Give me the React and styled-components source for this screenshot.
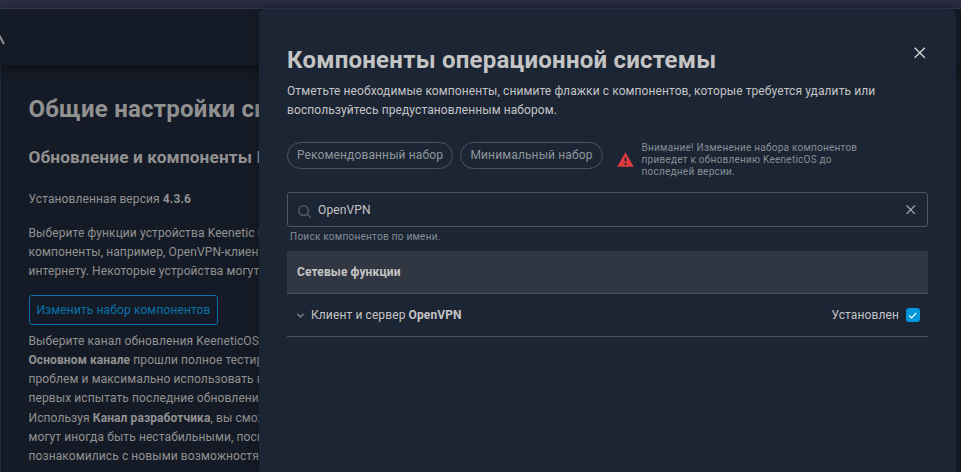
import React from "react";
import styled, { createGlobalStyle } from "styled-components";

const GlobalStyle = createGlobalStyle`
  *, *::before, *::after { box-sizing: border-box; }
  body { margin: 0; background: #151b26; font-family: Roboto, sans-serif; overflow: hidden; }
  h1, h2, p { margin: 0; }
  button, input { font-family: inherit; }
`;

const Window = styled.div`
  width: 961px;
  height: 472px;
  overflow: hidden;
  display: flex;
  flex-direction: column;
`;

const BrowserStrip = styled.div`
  flex: none;
  height: 9px;
  background: #2b2d42;
  border-bottom: 1px solid #3d4060;
`;

const Workspace = styled.div`
  position: relative;
  flex: 1;
  display: flex;
  flex-direction: column;
  background: #151b26;
`;

const AppHeader = styled.header`
  flex: none;
  height: 56px;
  background: #151b26;
  box-shadow: 0 2px 10px rgba(0, 0, 0, 0.55);
  z-index: 1;
  svg { display: block; }
`;

const Page = styled.main`
  flex: 1;
  border-left: 1px solid #1e2a3d;
  padding: 28px 0 0 27.5px;
  color: #919191;
  white-space: nowrap;
`;

const PageTitle = styled.h1`
  font-size: 24px;
  line-height: 32px;
  font-weight: 700;
  letter-spacing: 0.24px;
`;

const SectionTitle = styled.h2`
  margin-top: 21px;
  font-size: 17.28px;
  line-height: 22px;
  font-weight: 700;
  letter-spacing: 0.12px;
`;

const PageText = styled.p`
  margin-top: ${(p) => p.$gap}px;
  font-size: 12px;
  line-height: 19.2px;
  letter-spacing: 0.1px;
`;

const OutlineButton = styled.button`
  display: block;
  width: 189px;
  height: 30px;
  margin-top: 13.7px;
  margin-left: 0.5px;
  padding: 0;
  border: 1px solid #0573ab;
  border-radius: 3px;
  background: transparent;
  color: #0573ab;
  font-size: 12px;
  letter-spacing: 0.12px;
`;

const Drawer = styled.aside`
  position: absolute;
  top: 0;
  left: 259px;
  z-index: 2;
  width: 697px;
  height: 463px;
  padding: 35px 28px 0;
  border-radius: 6px 6px 0 0;
  background: #1c2534;
  box-shadow: 0 0 12px rgba(0, 0, 0, 0.3);
  color: #c4c4c4;
`;

const DrawerHeader = styled.div`
  display: flex;
  justify-content: space-between;
`;

const DrawerTitle = styled.h1`
  font-size: 24px;
  line-height: 32px;
  font-weight: 700;
  letter-spacing: 0.24px;
`;

const IconButton = styled.button`
  display: flex;
  width: ${(p) => p.$size}px;
  height: ${(p) => p.$size}px;
  margin: ${(p) => p.$margin || 0};
  padding: 0;
  border: 0;
  background: none;
  color: ${(p) => p.$color};
`;

const Description = styled.p`
  margin-top: 6px;
  font-size: 12px;
  line-height: 19.2px;
  letter-spacing: 0.095px;
`;

const PresetRow = styled.div`
  display: flex;
  margin-top: 21.6px;
  height: 36px;
`;

const Pill = styled.button`
  width: ${(p) => p.$width}px;
  height: 27px;
  margin-right: 7px;
  padding: 0 0 1px;
  border: 1px solid #4d545e;
  border-radius: 14px;
  background: transparent;
  color: #8f969c;
  font-size: 12px;
  letter-spacing: 0.13px;
`;

const Warning = styled.div`
  display: flex;
  margin-left: 7px;
  color: #868e94;
  font-size: 10px;
  line-height: 12px;
  letter-spacing: 0.24px;
  white-space: nowrap;
  svg { margin: 10px 7.6px 0 0; }
`;

const SearchField = styled.label`
  display: flex;
  align-items: center;
  height: 35px;
  margin-top: 14px;
  padding: 0 10px 0 9.5px;
  border: 1px solid #4d545e;
  border-radius: 3px;
`;

const SearchGlass = styled.svg`
  margin: 4px 0 0;
`;

const SearchInput = styled.input`
  flex: 1;
  padding: 0;
  margin-left: 7.5px;
  border: 0;
  outline: 0;
  background: transparent;
  color: #c4c4c4;
  font-size: 12px;
  letter-spacing: 0.14px;
`;

const Hint = styled.p`
  margin: 4px 0 0 3px;
  color: #868e94;
  font-size: 10px;
  line-height: 12px;
  letter-spacing: 0.26px;
`;

const GroupRow = styled.div`
  display: flex;
  align-items: center;
  height: 43px;
  margin-top: 8px;
  padding: 0 10px;
  border-bottom: 1px solid #4d545e;
  background: #303642;
  font-size: 12px;
  font-weight: 700;
  letter-spacing: 0.12px;
`;

const ComponentRow = styled.div`
  display: flex;
  align-items: center;
  height: 43px;
  padding: 0 8px 0 10px;
  border-bottom: 1px solid #4d545e;
  font-size: 12px;
  letter-spacing: 0.11px;
`;

const ComponentName = styled.span`
  flex: 1;
  margin-left: 7px;
`;

const Checkbox = styled.span`
  display: flex;
  width: 14px;
  height: 14px;
  margin-left: 7px;
  border-radius: 3px;
  background: #0096dc;
`;

const Cross = ({ size, stroke }) => (
  <svg width={size} height={size} viewBox="0 0 12 12" fill="none" stroke="currentColor" strokeWidth={stroke}>
    <path d="M.7.7 11.3 11.3M11.3.7.7 11.3" />
  </svg>
);

export default function App() {
  return (
    <Window>
      <GlobalStyle />
      <BrowserStrip />
      <Workspace>
        <AppHeader>
          <svg width="10" height="56" fill="none" stroke="#919191" strokeWidth="2">
            <path d="M-2 24 4 35" />
          </svg>
        </AppHeader>
        <Page>
          <PageTitle>Общие настройки системы</PageTitle>
          <SectionTitle>Обновление и компоненты KeeneticOS</SectionTitle>
          <PageText $gap={22}>Установленная версия <b>4.3.6</b></PageText>
          <PageText $gap={14.3}>
            Выберите функции устройства Keenetic и<br />
            компоненты, например, OpenVPN-клиент<br />
            интернету. Некоторые устройства могут
          </PageText>
          <OutlineButton>Изменить набор компонентов</OutlineButton>
          <PageText $gap={6.9}>
            Выберите канал обновления KeeneticOS.<br />
            <b>Основном канале</b> прошли полное тестиро<br />
            проблем и максимально использовать воз<br />
            первых испытать последние обновления<br />
            Используя <b>Канал разработчика</b>, вы сможете<br />
            могут иногда быть нестабильными, поскольку<br />
            познакомились с новыми возможностями
          </PageText>
        </Page>
        <Drawer>
          <DrawerHeader>
            <DrawerTitle>Компоненты операционной системы</DrawerTitle>
            <IconButton $size={12} $margin="3px 2px 0 0" $color="#d0d0d0" aria-label="Закрыть">
              <Cross size={11.5} stroke={1.5} />
            </IconButton>
          </DrawerHeader>
          <Description>
            Отметьте необходимые компоненты, снимите флажки с компонентов, которые требуется удалить или<br />
            воспользуйтесь предустановленным набором.
          </Description>
          <PresetRow>
            <Pill $width={166}>Рекомендованный набор</Pill>
            <Pill $width={143}>Минимальный набор</Pill>
            <Warning>
              <svg width="17" height="15" viewBox="0 0 17 15">
                <path d="M8.5.3 16.8 14.8H.2Z" fill="#e03c3f" />
                <path d="M8.5 5.5v4M8.5 11v2" stroke="#1c2534" strokeWidth="1.8" />
              </svg>
              <span>
                Внимание! Изменение набора компонентов<br />
                приведет к обновлению KeeneticOS до<br />
                последней версии.
              </span>
            </Warning>
          </PresetRow>
          <SearchField>
            <SearchGlass width="13" height="13" viewBox="0 0 13 13" fill="none" stroke="#555d67" strokeWidth="1.5">
              <circle cx="5.6" cy="5.6" r="4.8" />
              <path d="m9 9 3.7 3.7" />
            </SearchGlass>
            <SearchInput defaultValue="OpenVPN" />
            <IconButton $size={10} $margin="0 1px 0 0" $color="#a0a4a9" aria-label="Очистить">
              <Cross size={9.5} stroke={1.6} />
            </IconButton>
          </SearchField>
          <Hint>Поиск компонентов по имени.</Hint>
          <GroupRow>Сетевые функции</GroupRow>
          <ComponentRow>
            <svg width="7" height="5" viewBox="0 0 7 5" fill="none" stroke="#8b9298" strokeWidth="1.2">
              <path d="m.5 1 3 3 3-3" />
            </svg>
            <ComponentName>Клиент и сервер <b>OpenVPN</b></ComponentName>
            Установлен
            <Checkbox>
              <svg width="14" height="14" fill="none" stroke="#fff" strokeWidth="1.1">
                <path d="m3.2 7.7 2.3 2.2L10.3 5" />
              </svg>
            </Checkbox>
          </ComponentRow>
        </Drawer>
      </Workspace>
    </Window>
  );
}
